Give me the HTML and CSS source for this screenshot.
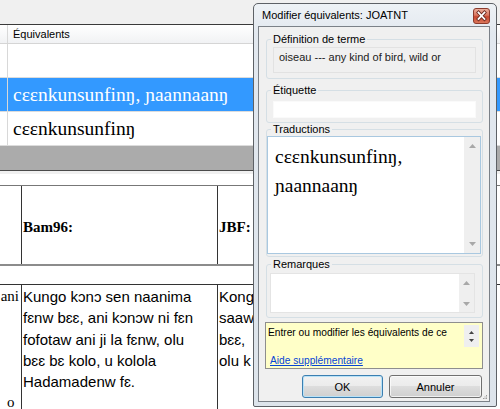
FILE: index.html
```html
<!DOCTYPE html>
<html lang="fr">
<head>
<meta charset="utf-8">
<title>Modifier équivalents</title>
<link rel="stylesheet" href="styles.css">
</head>
<body>
<div class="page">
  <div class="topbar"></div>
  <div class="grid">
    <div class="grow head"><div class="gutter"></div><div class="gcell">Équivalents</div></div>
    <div class="grow"><div class="gutter"></div><div class="gcell"></div></div>
    <div class="grow sel"><div class="gutter"></div><div class="gcell ipa">cɛɛnkunsunfinŋ, ɲaannaanŋ</div></div>
    <div class="grow"><div class="gutter"></div><div class="gcell ipa">cɛɛnkunsunfinŋ</div></div>
  </div>
  <div class="band"></div>
  <div class="strip"></div>
  <div class="doc">
    <div class="trow t1">
      <div class="c1"></div>
      <div class="c2 src">Bam96:</div>
      <div class="c3 src">JBF:</div>
    </div>
    <div class="trow t2">
      <div class="c1 leftcol">
        <div class="lc-r">ani</div>
        <div class="lc-blank"></div>
        <div class="lc-blank"></div>
        <div class="lc-blank"></div>
        <div class="lc-blank"></div>
        <div class="lc-o">o</div>
      </div>
      <div class="c2 body">
        <div>Kungo kɔnɔ sen naanima</div>
        <div>fɛnw bɛɛ, ani kɔnɔw ni fɛn</div>
        <div>fofotaw ani ji la fɛnw, olu</div>
        <div>bɛɛ bɛ kolo, u kolola</div>
        <div>Hadamadenw fɛ.</div>
      </div>
      <div class="c3 body">
        <div>Kongo</div>
        <div>saaw</div>
        <div>bɛɛ,</div>
        <div>olu k</div>
      </div>
    </div>
  </div>
</div>

<div class="dialog">
  <div class="titlebar">
    <span class="title">Modifier équivalents: JOATNT</span>
    <svg class="close" width="17" height="16" viewBox="0 0 17 16">
      <defs>
        <linearGradient id="cg" x1="0" y1="0" x2="0" y2="1">
          <stop offset="0" stop-color="#eeb4a2"/>
          <stop offset="0.45" stop-color="#d9755e"/>
          <stop offset="0.55" stop-color="#c8472f"/>
          <stop offset="1" stop-color="#dc7a5e"/>
        </linearGradient>
      </defs>
      <rect x="0.5" y="0.5" width="16" height="15" rx="2.5" fill="url(#cg)" stroke="#8b3b2d"/>
      <path d="M5.5 4.5 L11.5 11 M11.5 4.5 L5.5 11" stroke="#6b2a1f" stroke-width="3.4" stroke-linecap="square"/>
      <path d="M5.5 4.5 L11.5 11 M11.5 4.5 L5.5 11" stroke="#ffffff" stroke-width="1.8" stroke-linecap="square"/>
    </svg>
  </div>
  <div class="client">
    <fieldset class="group g-def">
      <legend>Définition de terme</legend>
      <div class="ro-field">oiseau --- any kind of bird, wild or</div>
    </fieldset>
    <fieldset class="group g-lab">
      <legend>Étiquette</legend>
      <div class="input"></div>
    </fieldset>
    <fieldset class="group g-tr">
      <legend>Traductions</legend>
      <div class="tbox">
        <div class="ttext ipa">
          <div>cɛɛnkunsunfinŋ,</div>
          <div>ɲaannaanŋ</div>
        </div>
        <div class="vscroll">
          <div class="sbtn"><svg width="7" height="4" viewBox="0 0 7 4"><path d="M0 4 L3.5 0 L7 4 Z" fill="#a8a8a8"/></svg></div>
          <div class="sbtn"><svg width="7" height="4" viewBox="0 0 7 4"><path d="M0 0 L7 0 L3.5 4 Z" fill="#a8a8a8"/></svg></div>
        </div>
      </div>
    </fieldset>
    <fieldset class="group g-rem">
      <legend>Remarques</legend>
      <div class="rbox">
        <div class="rtext"></div>
        <div class="vscroll small">
          <div class="sbtn"><svg width="7" height="4" viewBox="0 0 7 4"><path d="M0 4 L3.5 0 L7 4 Z" fill="#a8a8a8"/></svg></div>
          <div class="sbtn"><svg width="7" height="4" viewBox="0 0 7 4"><path d="M0 0 L7 0 L3.5 4 Z" fill="#a8a8a8"/></svg></div>
        </div>
      </div>
    </fieldset>
    <div class="help">
      <div class="help-top">
        <span class="help-text">Entrer ou modifier les équivalents de ce</span>
        <div class="spin">
          <svg width="5" height="3" viewBox="0 0 5 3"><path d="M0 3 L2.5 0 L5 3 Z" fill="#444"/></svg>
          <svg width="5" height="3" viewBox="0 0 5 3"><path d="M0 0 L5 0 L2.5 3 Z" fill="#444"/></svg>
        </div>
      </div>
      <a class="help-link" href="#">Aide supplémentaire</a>
    </div>
    <div class="buttons">
      <button class="btn ok">OK</button>
      <button class="btn cancel">Annuler</button>
    </div>
    <svg class="grip" width="5" height="5" viewBox="0 0 5 5">
      <rect x="3" y="0" width="1" height="1" fill="#9a9a9a"/>
      <rect x="1.5" y="1.5" width="1" height="1" fill="#9a9a9a"/>
      <rect x="3" y="1.5" width="1" height="1" fill="#9a9a9a"/>
      <rect x="0" y="3" width="1" height="1" fill="#9a9a9a"/>
      <rect x="1.5" y="3" width="1" height="1" fill="#9a9a9a"/>
      <rect x="3" y="3" width="1" height="1" fill="#9a9a9a"/>
    </svg>
  </div>
</div>
</body>
</html>
```

FILE: styles.css
```css
* { box-sizing: border-box; }
html, body { margin: 0; padding: 0; }
body {
  width: 500px;
  height: 409px;
  overflow: hidden;
  position: relative;
  background: #ffffff;
  font-family: "Liberation Sans", Arial, sans-serif;
  color: #000;
}

/* ---------- background page ---------- */
.page { display: flex; flex-direction: column; height: 409px; }
.topbar { flex: none; height: 25px; background: #f0f0f0; border-bottom: 1px solid #3a3a3a; }

.grid { flex: none; }
.grow { display: flex; height: 34px; border-bottom: 1px solid #dcdcdc; }
.grow.head {
  height: 19px;
  background: linear-gradient(#ffffff, #f1f2f4);
  border-bottom-color: #d5d5d5;
  font-size: 11px;
}
.gutter { flex: none; width: 8px; border-right: 1px solid #d8d8d8; }
.gcell { flex: 1; padding-left: 5px; display: flex; align-items: center; white-space: nowrap; overflow: hidden; }
.grow.sel { background: #3399ff; color: #ffffff; }
.ipa { font-family: "Liberation Serif", "DejaVu Serif", serif; font-size: 19.5px; }

.band { flex: none; height: 25px; background: #ababab; border-bottom: 1px solid #4a4a4a; }
.strip { flex: none; height: 3px; background: #f0f0f0; }
.doc { flex: 1; padding-top: 11px; overflow: hidden; }

.trow { display: flex; }
.t1 { height: 81px; border-top: 1px solid #777777; border-bottom: 2px solid #8c8c8c; }
.t2 { margin-top: 18px; border-top: 1px solid #333333; height: 140px; }
.c1 { flex: none; width: 22px; border-right: 1px solid #333333; overflow: hidden; }
.c2 { flex: none; width: 196px; border-right: 1px solid #333333; padding-left: 1px; overflow: hidden; }
.c3 { flex: 1; padding-left: 1px; overflow: hidden; white-space: nowrap; }
.src {
  font-family: "Liberation Serif", "Times New Roman", serif;
  font-weight: bold;
  font-size: 15px;
  display: flex;
  align-items: center;
  padding-top: 5px;
}
.body { font-size: 15px; line-height: 21.3px; padding-top: 1px; white-space: nowrap; }
.leftcol { font-family: "Liberation Serif", "Times New Roman", serif; font-size: 15px; line-height: 21.3px; padding-top: 1px; }
.lc-r { text-align: right; padding-right: 2px; }
.lc-blank { height: 21.3px; }
.lc-o { padding-left: 7px; }

/* ---------- dialog ---------- */
.dialog {
  position: absolute;
  left: 253px;
  top: 3px;
  width: 244px;
  height: 404px;
  border: 1px solid #5d6166;
  border-radius: 5px 5px 2px 2px;
  background: linear-gradient(#eef2f6 0px, #e2e8ef 30px, #dde4eb 100%);
  padding: 0 6px 4px 4px;
  display: flex;
  flex-direction: column;
  font-size: 11px;
}
.titlebar { flex: none; height: 22px; display: flex; align-items: center; padding-left: 4px; }
.title { white-space: nowrap; }
.close { margin-left: auto; margin-top: 1px; flex: none; }

.client {
  position: relative;
  flex: 1;
  border: 1px solid #7b8188;
  background: #f0f0f0;
  padding: 6px 6px 0 6px;
  display: flex;
  flex-direction: column;
}

.group {
  margin: 0 0 0 1px;
  border: 1px solid #d5dfe5;
  border-radius: 3px;
  padding: 0 6px;
  min-width: 0;
}
.group legend { padding: 0 2px; margin-left: -2px; font-size: 11px; line-height: 13px; }

.g-def { padding-top: 1px; padding-bottom: 5px; }
.ro-field {
  height: 26px;
  border: 1px solid #e2e2e2;
  background: #f0f0f0;
  padding: 0 5px;
  line-height: 18px;
  white-space: nowrap;
  overflow: hidden;
  color: #222;
}

.g-lab { margin-top: 5px; padding-top: 4px; padding-bottom: 4px; }
.input { height: 17px; background: #ffffff; border: 1px solid #fafafa; }

.g-tr { margin-top: 0; padding: 0 1px 2px 0; }
.g-tr legend { margin-left: 4px; }
.tbox { height: 118px; border: 1px solid #a9c8e0; background: #ffffff; display: flex; }
.ttext { flex: 1; padding: 5px 0 0 7px; line-height: 29px; white-space: nowrap; }
.vscroll {
  flex: none;
  width: 16px;
  background: #efefef;
  display: flex;
  flex-direction: column;
  justify-content: space-between;
}
.sbtn { height: 18px; display: flex; align-items: center; justify-content: center; }
.vscroll.small { width: 15px; }
.vscroll.small .sbtn { height: 17px; }

.g-rem { margin-top: 1px; padding: 2px 7px 4px 3px; }
.g-rem legend { margin-left: 1px; }
.rbox { height: 40px; border: 1px solid #e4e4e4; background: #ffffff; display: flex; }
.rtext { flex: 1; }

.help {
  flex: none;
  margin-top: 4px;
  height: 47px;
  background: #ffffc8;
  border: 1px solid #8e8e8e;
  padding: 2px 3px 1px 2px;
  display: flex;
  flex-direction: column;
  font-size: 10.2px;
}
.help-top { display: flex; align-items: flex-start; height: 22px; }
.help-text { line-height: 13px; white-space: nowrap; flex: 1; overflow: hidden; padding-top: 1px; }
.spin {
  flex: none;
  width: 15px;
  height: 22px;
  background: #efefef;
  display: flex;
  flex-direction: column;
  align-items: center;
  justify-content: space-around;
  padding: 3px 0;
}
.spin svg { display: block; }
.help-link { margin-top: auto; padding-left: 2px; line-height: 13px; color: #0645d6; text-decoration: underline; }

.buttons { flex: none; margin-top: 6px; display: flex; justify-content: flex-end; gap: 6px; padding-right: 1px; }
.btn {
  height: 23px;
  border: 1px solid #707070;
  border-radius: 3px;
  background: linear-gradient(#f2f2f2 0%, #ebebeb 49%, #dddddd 50%, #cfcfcf 100%);
  font-family: "Liberation Sans", Arial, sans-serif;
  font-size: 11px;
  color: #000;
  padding: 0;
  box-shadow: inset 0 0 0 1px rgba(255, 255, 255, 0.7);
}
.btn.ok { width: 81px; border-color: #3c7fb1; box-shadow: inset 0 0 0 1px #b9e2f7; }
.btn.cancel { width: 93px; }

.grip { position: absolute; right: 1px; bottom: 1px; }
```
